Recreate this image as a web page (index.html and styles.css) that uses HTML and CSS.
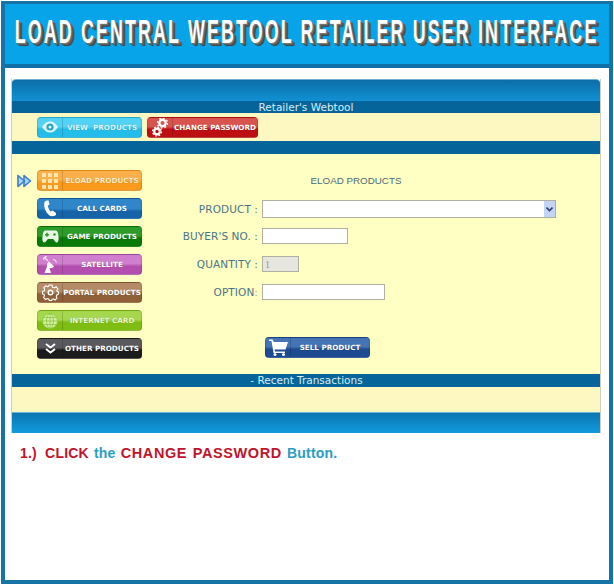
FILE: index.html
```html
<!DOCTYPE html>
<html lang="en">
<head>
    <meta charset="UTF-8">
    <meta name="viewport" content="width=device-width, initial-scale=1.0">
    <title>Load Central Webtool Retailer User Interface</title>
    <link rel="stylesheet" href="styles.css">
</head>
<body>

    <div class="frame">
        <div class="banner">
            <h1>LOAD CENTRAL WEBTOOL RETAILER USER INTERFACE</h1>
        </div>

        <div class="panel">
            <div class="panel-cap"></div>
            <div class="panel-bar">Retailer's Webtool</div>

            <div class="top-buttons">
                <a class="btn btn-sky">
                    <span class="btn-icon">
                        <svg width="18" height="14" viewBox="0 0 18 14"><path d="M1 7C4 2.500 6.500 1.500 9 1.500S14 2.500 17 7C14 11.500 11.500 12.500 9 12.500S4 11.500 1 7Z" fill="#dff6fc"/><circle cx="9" cy="7" r="3.600" fill="#2aa3c9"/><circle cx="9" cy="7" r="1.500" fill="#dff6fc"/></svg>
                    </span>
                    <span class="btn-label">VIEW&nbsp; PRODUCTS</span>
                </a>
                <a class="btn btn-red btn-wide">
                    <span class="btn-icon">
                        <svg width="16" height="20" viewBox="0 0 16 20"><circle cx="10.500" cy="6" r="3.200" fill="none" stroke="#fff" stroke-width="2.400"/><circle cx="10.500" cy="6" r="5" fill="none" stroke="#fff" stroke-width="1.400" stroke-dasharray="1.800 2.100"/><circle cx="5" cy="14.500" r="2.800" fill="none" stroke="#fff" stroke-width="2.200"/><circle cx="5" cy="14.500" r="4.400" fill="none" stroke="#fff" stroke-width="1.400" stroke-dasharray="1.700 1.750"/></svg>
                    </span>
                    <span class="btn-label">CHANGE PASSWORD</span>
                </a>
            </div>

            <div class="panel-bar panel-bar-blank"></div>

            <div class="main">
                <div class="side-menu">
                    <div class="menu-row">
                        <span class="menu-marker">
                            <svg width="15" height="14" viewBox="0 0 15 14"><path d="M7 1.500L13.500 7L7 12.500Z" fill="#a5d4f7" stroke="#3a7ccc" stroke-width="1.600" stroke-linejoin="round"/><path d="M1 1.500L7.500 7L1 12.500Z" fill="#a5d4f7" stroke="#3a7ccc" stroke-width="1.600" stroke-linejoin="round"/></svg>
                        </span>
                        <a class="btn btn-orange">
                            <span class="btn-icon">
                                <svg width="16" height="16" viewBox="0 0 16 16" fill="#ffe6b0"><rect x="0" y="0" width="4" height="4"/><rect x="6" y="0" width="4" height="4"/><rect x="12" y="0" width="4" height="4"/><rect x="0" y="6" width="4" height="4"/><rect x="6" y="6" width="4" height="4"/><rect x="12" y="6" width="4" height="4"/><rect x="0" y="12" width="4" height="4"/><rect x="6" y="12" width="4" height="4"/><rect x="12" y="12" width="4" height="4"/></svg>
                            </span>
                            <span class="btn-label">ELOAD PRODUCTS</span>
                        </a>
                    </div>
                    <div class="menu-row">
                        <span class="menu-marker"></span>
                        <a class="btn btn-blue">
                            <span class="btn-icon">
                                <svg width="14" height="17" viewBox="0 0 14 17"><path d="M3.500 0.500L1.500 2C0.500 6 2 12 6.500 15.500C8 16.500 11 16.500 13 15L13 13L9.500 10.500L7.500 11.500C6 10 5 7.500 4.800 5.500L6.500 4.500L5.500 0.500Z" fill="#fff"/></svg>
                            </span>
                            <span class="btn-label">CALL CARDS</span>
                        </a>
                    </div>
                    <div class="menu-row">
                        <span class="menu-marker"></span>
                        <a class="btn btn-green">
                            <span class="btn-icon">
                                <svg width="17" height="13" viewBox="0 0 17 13"><path d="M3.500 0.500H13.500C15 0.500 15.800 2 16.200 4.500C16.800 8 17 12 15 12.500C13.500 12.800 12.500 10.500 11.200 9H5.800C4.500 10.500 3.500 12.800 2 12.500C0 12 0.200 8 0.800 4.500C1.200 2 2 0.500 3.500 0.500Z" fill="#e9f7e6"/><rect x="3" y="4" width="4" height="1.500" fill="#2a9420"/><rect x="4.250" y="2.750" width="1.500" height="4" fill="#2a9420"/><circle cx="12.500" cy="4.500" r="1.200" fill="#2a9420"/></svg>
                            </span>
                            <span class="btn-label">GAME PRODUCTS</span>
                        </a>
                    </div>
                    <div class="menu-row">
                        <span class="menu-marker"></span>
                        <a class="btn btn-purple">
                            <span class="btn-icon">
                                <svg width="15" height="18" viewBox="0 0 15 18"><path d="M1 1L5 5M3.500 0L0 3.500" stroke="#f3d9f2" stroke-width="1.600" fill="none"/><path d="M6 5.500L11 10.500C10 12 8 12.500 6.500 12L8 17H1.500L4 10.500C3.500 8.500 4.500 6.500 6 5.500Z" fill="#fff"/><path d="M10 3C12 3.500 13 4.500 13.500 6.500" stroke="#f3d9f2" stroke-width="1.200" fill="none"/></svg>
                            </span>
                            <span class="btn-label">SATELLITE</span>
                        </a>
                    </div>
                    <div class="menu-row">
                        <span class="menu-marker"></span>
                        <a class="btn btn-brown">
                            <span class="btn-icon">
                                <svg width="17" height="17" viewBox="0 0 17 17" fill="none" stroke="#fff"><circle cx="8.500" cy="8.500" r="2.300" stroke-width="1.400"/><path d="M7 1H10L10.400 3.200L12.200 4L14.100 2.800L16 5L14.700 6.700L15.200 7.500L16.500 7.800V10.200L14.900 10.800L14.300 12.400L15 14.200L13 16L11.200 14.800L10 15.300L9.700 16.500H7.300L6.800 15L5.200 14.500L3.500 15.500L1.500 13.500L2.500 11.800L2 10.300L0.500 10V7.400L2.200 6.800L2.700 5.300L1.800 3.500L3.800 1.600L5.400 2.600L6.700 2.200Z" stroke-width="1.100"/></svg>
                            </span>
                            <span class="btn-label">PORTAL PRODUCTS</span>
                        </a>
                    </div>
                    <div class="menu-row">
                        <span class="menu-marker"></span>
                        <a class="btn btn-lime">
                            <span class="btn-icon">
                                <svg width="16" height="16" viewBox="0 0 16 16" fill="#d6efa6" stroke="#8cc63a" stroke-width="0.800"><circle cx="8" cy="8" r="7.500"/><ellipse cx="8" cy="8" rx="3.500" ry="7.500" fill="none"/><path d="M8 0.500V15.500M0.500 8H15.500M1.500 4.500H14.500M1.500 11.500H14.500" fill="none"/></svg>
                            </span>
                            <span class="btn-label">INTERNET CARD</span>
                        </a>
                    </div>
                    <div class="menu-row">
                        <span class="menu-marker"></span>
                        <a class="btn btn-black">
                            <span class="btn-icon">
                                <svg width="11" height="11" viewBox="0 0 11 11" fill="none" stroke="#fff" stroke-width="2"><path d="M1 1L5.500 4.500L10 1M1 6L5.500 9.500L10 6"/></svg>
                            </span>
                            <span class="btn-label">OTHER PRODUCTS</span>
                        </a>
                    </div>
                </div>

                <div class="sell-form">
                    <div class="form-title">ELOAD PRODUCTS</div>

                    <div class="form-row form-row-product">
                        <label>PRODUCT :</label>
                        <div class="select-box">
                            <select></select>
                            <span class="select-arrow">
                                <svg width="7" height="5" viewBox="0 0 7 5" fill="none" stroke="#2a3f6e" stroke-width="1.600"><path d="M0.500 0.500L3.500 3.500L6.500 0.500"/></svg>
                            </span>
                        </div>
                    </div>
                    <div class="form-row">
                        <label>BUYER'S NO. :</label>
                        <input type="text" class="input-field input-buyer">
                    </div>
                    <div class="form-row">
                        <label>QUANTITY :</label>
                        <input type="text" class="input-field input-qty" value="1" disabled>
                    </div>
                    <div class="form-row">
                        <label>OPTION<span class="label-colon">:</span></label>
                        <input type="text" class="input-field input-option">
                    </div>

                    <a class="btn btn-navy btn-sell">
                        <span class="btn-icon">
                            <svg width="19" height="17" viewBox="0 0 19 17"><path d="M0 0.500H3.500L5 3H19L16.500 10.500H5.500L6 12.500H16V14H4.500L2.500 2H0Z" fill="#fff"/><circle cx="6" cy="15.500" r="1.500" fill="#fff"/><circle cx="14.500" cy="15.500" r="1.500" fill="#fff"/></svg>
                        </span>
                        <span class="btn-label">SELL PRODUCT</span>
                    </a>
                </div>
            </div>

            <div class="panel-bar panel-bar-recent">- Recent Transactions</div>
            <div class="recent-body"></div>
            <div class="panel-cap panel-cap-bottom"></div>
        </div>

        <p class="step">
            <span class="red red-first">1.)&nbsp; CLICK</span>
            <span class="teal">the</span>
            <span class="red red-wide">CHANGE PASSWORD</span>
            <span class="teal">Button.</span>
        </p>
    </div>

</body>
</html>
```

FILE: styles.css
```css
body {
    margin: 0;
    padding: 0;
    background-color: #fff;
    font-family: "DejaVu Sans", Verdana, sans-serif;
}

.frame {
    box-sizing: border-box;
    width: 612px;
    height: 583px;
    margin: 1px;
    border: 4px solid #1673a6;
    border-top-width: 3px;
    background: #fff;
}

.banner {
    height: 60px;
    background: #08a4e9;
    border-bottom: 4px solid #0f6fa6;
    display: flex;
    align-items: center;
    justify-content: center;
    overflow: hidden;
}

.banner h1 {
    flex-shrink: 0;
    margin: 0 0 4px;
    font-family: "Liberation Sans", Arial, sans-serif;
    font-size: 33px;
    font-weight: bold;
    letter-spacing: 4px;
    white-space: nowrap;
    color: #fff;
    transform: scaleX(0.54);
    text-shadow: 2px 1px 0 #777, 4px 2px 0 #5c5c5c, 6px 3px 1px #444;
}

.panel {
    width: 588px;
    margin: 11px 0 0 7px;
    box-shadow: 1px 0 0 #cfcfc0, -1px 0 0 #cfcfc0;
}

.panel-cap {
    height: 21px;
    border-radius: 4px 4px 0 0;
    border-top: 1px solid #6fb4d6;
    background: linear-gradient(#0b6ea7, #1191d4);
}

.panel-cap-bottom {
    height: 20px;
    border-radius: 0;
    background: linear-gradient(#0c76b0, #119bdf);
}

.panel-bar {
    box-sizing: border-box;
    height: 12px;
    background: #05659b;
    color: #d8eef6;
    font-size: 10.500px;
    line-height: 12px;
    text-align: center;
}

.panel-bar-blank {
    height: 13px;
}

.panel-bar-recent {
    height: 13px;
    padding-left: 1px;
}

.top-buttons {
    display: flex;
    gap: 5px;
    height: 28px;
    padding-left: 25px;
    align-items: center;
    background: #fdf8c2;
}

.main {
    display: flex;
    height: 220px;
    background: #ffffc4;
}

.recent-body {
    height: 25px;
    background: #fdf8c2;
}

.side-menu {
    display: flex;
    flex-direction: column;
    gap: 7px;
    padding-top: 16px;
}

.menu-row {
    display: flex;
    align-items: center;
}

.menu-marker {
    display: flex;
    width: 25px;
    padding-left: 5px;
    box-sizing: border-box;
}

/* shared glossy image button */
.btn {
    box-sizing: border-box;
    display: flex;
    width: 105px;
    height: 21px;
    border-radius: 4px;
    overflow: hidden;
    color: #fff;
    border: 1px solid rgba(0, 0, 0, 0.12);
}

.btn-wide {
    width: 111px;
}

.btn-icon {
    width: 24px;
    flex-shrink: 0;
    display: flex;
    align-items: center;
    justify-content: center;
    border-right: 1px solid rgba(0, 0, 0, 0.15);
}

.btn-label {
    flex-grow: 1;
    font-size: 7.200px;
    font-weight: bold;
    line-height: 20px;
    text-align: center;
    white-space: nowrap;
    text-shadow: 0 0 1px rgba(0, 0, 0, 0.3);
}

.btn-sky { background: linear-gradient(#52d2f4 45%, #24bdea 60%); color: #d9f6fc; }
.btn-red { background: linear-gradient(#d9534f 45%, #bd0f12 60%); }
.btn-orange { background: linear-gradient(#fdb04a 45%, #f99a1c 60%); color: #fdebc0; }
.btn-blue { background: linear-gradient(#2f86c9 50%, #1763a8 65%); }
.btn-green { background: linear-gradient(#2c9b28 45%, #087a08 60%); }
.btn-purple { background: linear-gradient(#cf7fcd 45%, #b34fae 60%); }
.btn-brown { background: linear-gradient(#b58a66 45%, #8f5f38 60%); }
.btn-lime { background: linear-gradient(#a6d84e 45%, #7fbd12 60%); color: #e8f7c9; }
.btn-black { background: linear-gradient(#5a5a5e 45%, #1c1c1c 60%); }
.btn-navy { background: linear-gradient(#4474b4 45%, #1e4a90 60%); }

.sell-form {
    width: 446px;
    padding-top: 21px;
}

.form-title {
    height: 12px;
    margin-bottom: 13px;
    padding-right: 18px;
    font-family: "Liberation Sans", Arial, sans-serif;
    font-size: 9.800px;
    line-height: 12px;
    text-align: center;
    color: #4d6c78;
}

.form-row {
    display: flex;
    align-items: center;
    gap: 4px;
    height: 16px;
    margin-bottom: 12px;
}

.form-row-product {
    height: 18px;
    margin-bottom: 10px;
}

.form-row label {
    width: 116px;
    flex-shrink: 0;
    font-size: 10.500px;
    letter-spacing: 0.100px;
    text-align: right;
    color: #4a7484;
    white-space: nowrap;
}

.label-colon {
    color: #9ab0b0;
}

.input-field {
    box-sizing: border-box;
    height: 16px;
    margin: 0;
    padding: 0 2px;
    background: #fff;
    border: 1px solid #b0b0a0;
    font-family: "Liberation Serif", serif;
    font-size: 10px;
    outline: none;
}

.input-buyer { width: 86px; }
.input-qty { width: 37px; background: #e6e6de; color: #999; }
.input-option { width: 123px; }

.select-box {
    box-sizing: border-box;
    display: flex;
    width: 294px;
    height: 18px;
    background: #fff;
    border: 1px solid #b0b0a0;
}

.select-box select {
    flex-grow: 1;
    min-width: 0;
    border: none;
    background: transparent;
    appearance: none;
    outline: none;
}

.select-arrow {
    display: flex;
    width: 11px;
    align-items: center;
    justify-content: center;
    background: #c3d4f5;
}

.btn-sell {
    margin: 37px 0 0 123px;
}

.step {
    margin: 12px 0 0 15px;
    font-family: "Liberation Sans", Arial, sans-serif;
    font-size: 14px;
    font-weight: bold;
    line-height: 16px;
    letter-spacing: 0.200px;
    word-spacing: 1px;
}

.red { color: #c0142c; }
.red-first { word-spacing: 0; }
.red-wide { font-size: 14.500px; letter-spacing: 0.600px; }
.teal { color: #2b9cc4; }
```
